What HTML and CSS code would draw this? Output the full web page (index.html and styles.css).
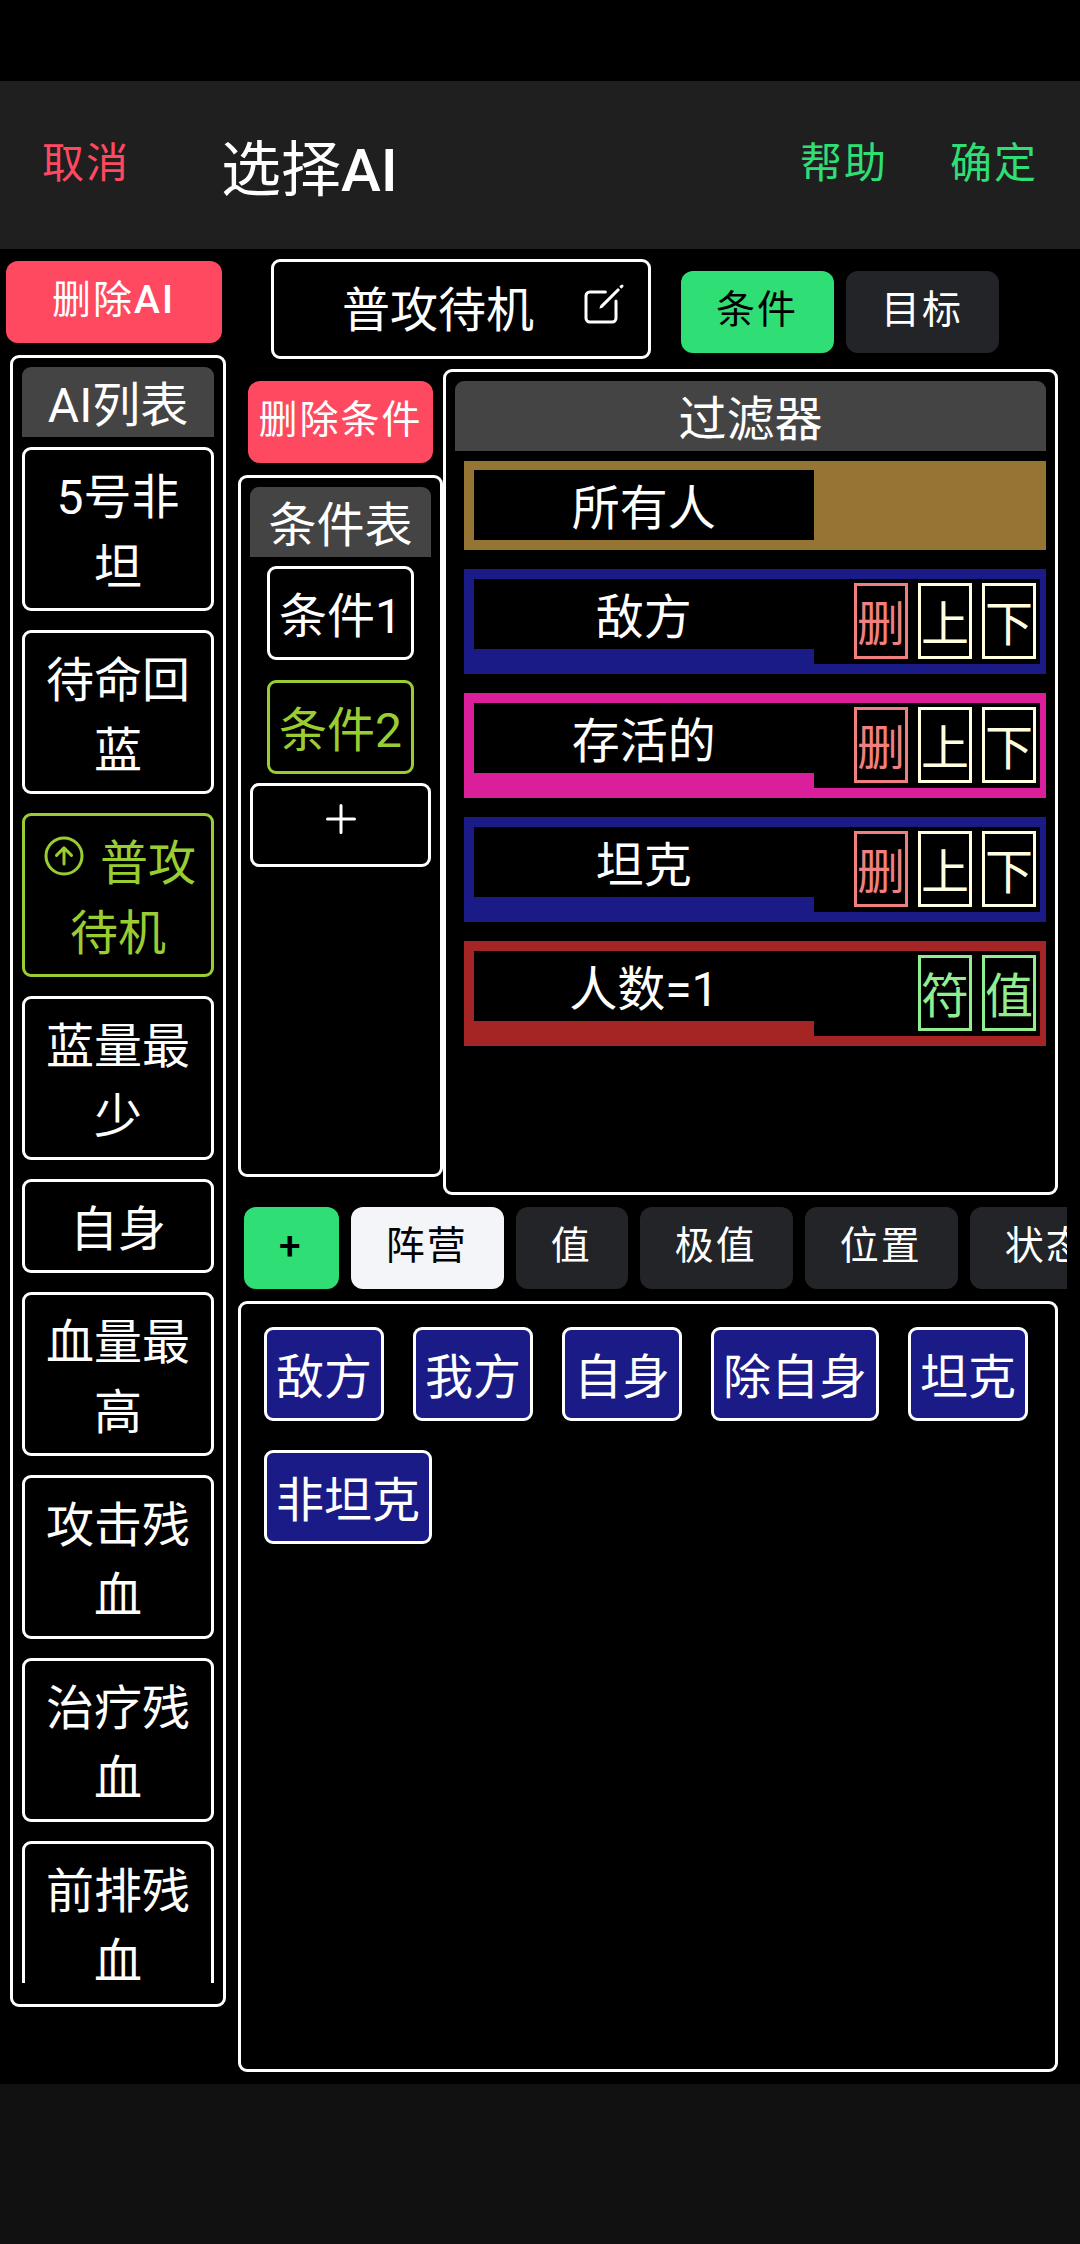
FILE: index.html
```html
<!DOCTYPE html>
<html lang="zh-CN">
<head>
  <meta charset="UTF-8" />
  <meta name="viewport" content="width=device-width, initial-scale=1.0" />
  <title>选择AI</title>
  <link rel="stylesheet" href="styles.css">
</head>
<body>
  <header class="toolbar">
    <button class="link danger">取消</button>
    <h1>选择<b>AI</b></h1>
    <button class="link success">帮助</button>
    <button class="link success">确定</button>
  </header>

  <main class="content">
    <aside class="sidebar">
      <button class="btn btn-danger">删除<b>AI</b></button>
      <section class="panel ai-panel">
        <h2>AI列表</h2>
        <div class="ai-list">
          <button class="item">5号非坦</button>
          <button class="item">待命回蓝</button>
          <button class="item active"><svg class="icon" viewBox="0 0 512 512"><path d="M448 256c0-106-86-192-192-192S64 150 64 256s86 192 192 192 192-86 192-192z"/><path d="M176 249l80-79 80 79M256 181v161"/></svg> 普攻待机</button>
          <button class="item">蓝量最少</button>
          <button class="item">自身</button>
          <button class="item">血量最高</button>
          <button class="item">攻击残血</button>
          <button class="item">治疗残血</button>
          <button class="item">前排残血</button>
        </div>
      </section>
    </aside>

    <div class="workspace">
      <div class="name-bar">
        <button class="item name">普攻待机
          <svg class="icon" viewBox="0 0 512 512"><path d="M384 224v184a40 40 0 01-40 40H104a40 40 0 01-40-40V168a40 40 0 0140-40h167"/><path class="fill" d="M459.94 53.25a16.06 16.06 0 00-23.22-.56L424.35 65a8 8 0 000 11.31l11.34 11.32a8 8 0 0011.34 0l12.06-12c6.1-6.09 6.67-16.01.85-22.38zM399.34 90L218.82 270.2a9 9 0 00-2.31 3.93L208.16 299a3.91 3.91 0 004.86 4.86l24.85-8.35a9 9 0 003.93-2.31L422 112.66a9 9 0 000-12.66l-9.95-10a9 9 0 00-12.71 0z"/></svg>
        </button>
        <div class="modes">
          <button class="btn btn-success">条件</button>
          <button class="btn btn-dark">目标</button>
        </div>
      </div>

      <div class="editor">
        <div class="conditions">
          <button class="btn btn-danger tight">删除条件</button>
          <section class="panel condition-panel">
            <h2>条件表</h2>
            <div class="condition-list">
              <button class="item">条件1</button>
              <button class="item active">条件2</button>
            </div>
            <button class="item add" aria-label="添加条件">
              <svg class="icon" viewBox="0 0 512 512"><path d="M256 112v288M400 256H112"/></svg>
            </button>
          </section>
        </div>

        <section class="panel filter-panel">
          <h2>过滤器</h2>
          <div class="filters">
            <div class="filter all">
              <div class="label">所有人</div>
            </div>
            <div class="filter camp">
              <div class="label">敌方</div>
              <div class="actions">
                <button class="del">删</button>
                <button class="move">上</button>
                <button class="move">下</button>
              </div>
            </div>
            <div class="filter state">
              <div class="label">存活的</div>
              <div class="actions">
                <button class="del">删</button>
                <button class="move">上</button>
                <button class="move">下</button>
              </div>
            </div>
            <div class="filter camp">
              <div class="label">坦克</div>
              <div class="actions">
                <button class="del">删</button>
                <button class="move">上</button>
                <button class="move">下</button>
              </div>
            </div>
            <div class="filter count">
              <div class="label">人数=1</div>
              <div class="actions">
                <button class="edit">符</button>
                <button class="edit">值</button>
              </div>
            </div>
          </div>
        </section>
      </div>

      <nav class="tabs">
        <button class="btn btn-success"><b>+</b></button>
        <button class="btn btn-light">阵营</button>
        <button class="btn btn-dark">值</button>
        <button class="btn btn-dark">极值</button>
        <button class="btn btn-dark">位置</button>
        <button class="btn btn-dark">状态</button>
      </nav>

      <section class="panel options">
        <button class="item">敌方</button>
        <button class="item">我方</button>
        <button class="item">自身</button>
        <button class="item">除自身</button>
        <button class="item">坦克</button>
        <button class="item">非坦克</button>
      </section>
    </div>
  </main>

  <footer class="bottom"></footer>
</body>
</html>
```

FILE: styles.css
```css
* {
  box-sizing: border-box;
}

body {
  margin: 0;
  height: 100vh;
  display: flex;
  flex-direction: column;
  padding-top: 81px;
  background: #000;
  color: #fff;
  font-family: Roboto, "Noto Sans CJK SC", sans-serif;
  font-size: 48px;
  line-height: 70px;
}

button {
  margin: 0;
  padding: 0;
  border: 0;
  background: none;
  color: inherit;
  font: inherit;
  cursor: pointer;
}

h1, h2 {
  margin: 0;
  font-weight: 400;
}

b {
  font-weight: 500;
}

/* toolbar */
.toolbar {
  flex: none;
  display: flex;
  align-items: center;
  height: 168px;
  padding: 0 42px;
  background: #1f1f1f;
}

.toolbar h1 {
  flex: 1;
  padding: 12px 0 0 91px;
  font-size: 60px;
}

.link {
  padding-bottom: 2px;
  font-size: 42px;
  letter-spacing: 2px;
}

.link + .link {
  margin-left: 62px;
}

.danger {
  color: #ff4961;
}

.success {
  color: #2fdf75;
}

.content {
  flex: 1;
  min-height: 0;
  display: flex;
  gap: 12px;
}

/* shared parts */
.btn {
  flex: none;
  height: 82px;
  padding: 0 36px 4px 35px;
  border-radius: 12px;
  font-size: 39px;
  letter-spacing: 2px;
  white-space: nowrap;
}

.btn-danger {
  background: #ff4961;
  color: #fff;
}

.btn-success {
  background: #2fdf75;
  color: #000;
}

.btn-light {
  background: #f4f5f8;
  color: #000;
}

.btn-dark {
  background: #222428;
  color: #fff;
}

.tight {
  padding: 0 0 4px;
}

.panel {
  border: 3px solid #fff;
  border-radius: 9px;
  padding: 9px;
}

.panel h2 {
  flex: none;
  height: 70px;
  padding-top: 4px;
  background: #444;
  border-radius: 9px 9px 0 0;
  font-size: 48px;
  text-align: center;
}

.item {
  flex: none;
  padding: 13px 9px 5px;
  border: 3px solid currentColor;
  border-radius: 9px;
}

.active {
  color: yellowgreen;
}

.icon {
  width: 48px;
  height: 48px;
  fill: none;
  stroke: currentColor;
  stroke-width: 32;
  stroke-linecap: round;
  stroke-linejoin: round;
}

.icon .fill {
  fill: currentColor;
  stroke: none;
}

/* AI list */
.sidebar {
  flex: none;
  width: 226px;
  display: flex;
  flex-direction: column;
  gap: 12px;
  padding: 12px 0 77px;
}

.sidebar .btn {
  margin: 0 4px 0 6px;
}

.ai-panel {
  flex: 1;
  min-height: 0;
  display: flex;
  flex-direction: column;
  margin-left: 10px;
  padding-bottom: 21px;
}

.ai-list {
  flex: 1;
  min-height: 0;
  display: flex;
  flex-direction: column;
  gap: 19px;
  padding-top: 10px;
  overflow: hidden;
}

/* workspace */
.workspace {
  flex: 1;
  min-width: 0;
  display: grid;
  grid-template-columns: minmax(0, 1fr);
  grid-template-rows: auto minmax(0, 15fr) auto minmax(0, 14fr);
  padding: 10px 13px 12px 0;
}

.name-bar {
  display: flex;
  align-items: flex-end;
  gap: 30px;
  padding-left: 33px;
  margin-bottom: 10px;
}

.name {
  width: 380px;
  height: 100px;
  display: flex;
  align-items: center;
  justify-content: flex-end;
  gap: 46px;
  padding: 12px 20px 9px 9px;
}

.name .icon {
  margin-bottom: 14px;
}

.modes {
  display: flex;
  gap: 12px;
  margin-bottom: 6px;
}

.editor {
  display: flex;
  margin-right: 9px;
}

.conditions {
  flex: none;
  width: 205px;
  display: flex;
  flex-direction: column;
  gap: 12px;
  padding: 12px 0 18px;
}

.conditions .btn {
  margin: 0 10px;
}

.condition-panel {
  flex: 1;
  display: flex;
  flex-direction: column;
}

.condition-list {
  display: flex;
  flex-direction: column;
  align-items: center;
  gap: 20px;
  padding: 9px 0;
}

.add {
  display: flex;
  justify-content: center;
  height: 84px;
  padding: 9px;
}

/* filters */
.filter-panel {
  flex: 1;
  min-width: 0;
}

.filters {
  display: flex;
  flex-direction: column;
  gap: 19px;
  padding: 10px 0 0 9px;
}

.filter {
  display: grid;
  grid-template-columns: 3fr 2fr;
  align-items: start;
  padding: 10px 6px 10px 10px;
}

.label {
  height: 70px;
  padding-top: 4px;
  background: #000;
  text-align: center;
}

.actions {
  display: flex;
  justify-content: flex-end;
  gap: 10px;
  padding: 4px 4px 5px;
  background: #000;
}

.actions button {
  height: 76px;
  padding-top: 4px;
  border: 3px solid currentColor;
}

.all {
  padding: 9px 6px 10px 10px;
  background: #967434;
}

.camp {
  background: #1b1b88;
}

.state {
  background: #db1f9b;
}

.count {
  background: #a52424;
}

.del {
  color: lightcoral;
}

.move {
  color: lightyellow;
}

.edit {
  color: lightgreen;
}

/* tabs and options */
.tabs {
  display: flex;
  gap: 12px;
  padding: 12px 0 12px 6px;
  overflow: hidden;
}

.options {
  display: flex;
  flex-wrap: wrap;
  align-content: flex-start;
  gap: 29px;
  margin-right: 9px;
  padding: 23px;
}

.options .item {
  background: #1b1b88;
}

.bottom {
  flex: none;
  height: 160px;
  background: #111;
}
```
